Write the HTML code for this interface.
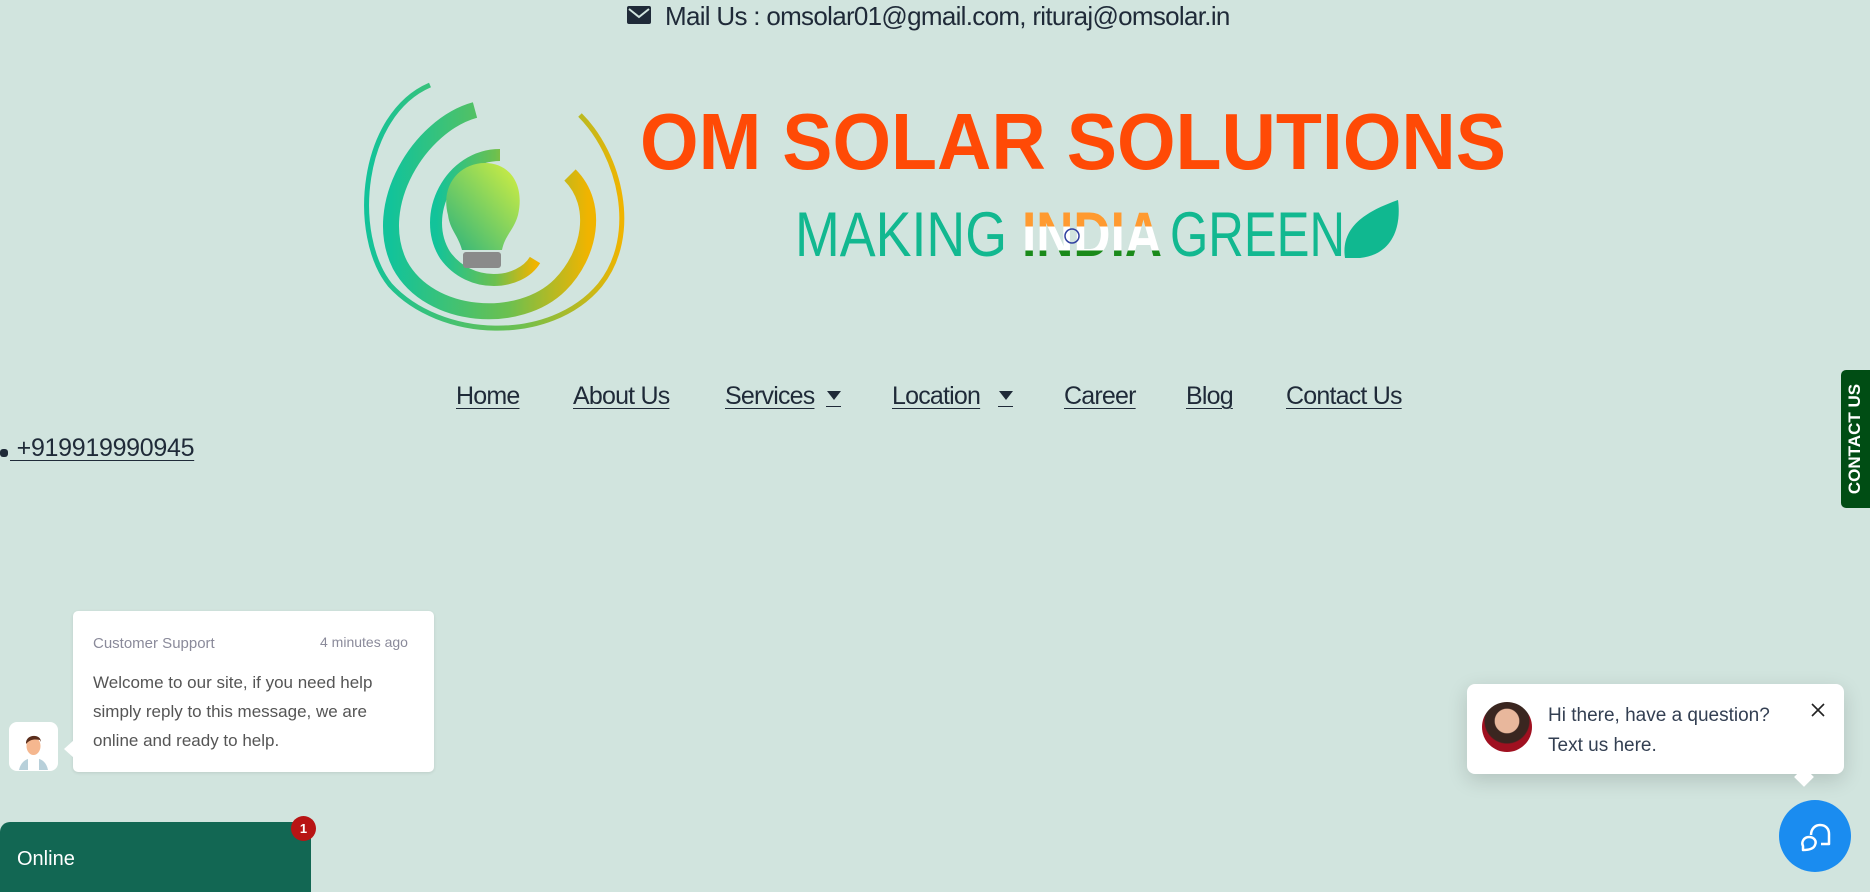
<!DOCTYPE html>
<html><head><meta charset="utf-8"><style>
*{margin:0;padding:0;box-sizing:border-box}
body{width:1870px;height:883px;overflow:hidden;background:#d1e4de;font-family:"Liberation Sans",sans-serif;position:relative;color:#1f2a38}
.abs{position:absolute}
.mail{top:1px;font-size:26px;letter-spacing:-0.7px;color:#1f2a38;white-space:nowrap}
.nav a{position:absolute;top:382px;font-size:25px;letter-spacing:-0.8px;color:#1f2a38;text-decoration:underline;text-underline-offset:4px;text-decoration-thickness:1px;white-space:nowrap}
.arr{position:absolute;top:391px;width:0;height:0;border-left:7px solid transparent;border-right:7px solid transparent;border-top:9px solid #1f2a38}
.arrl{position:absolute;top:406px;width:15px;height:1px;background:#1f2a38}
</style></head><body>
<div class="abs" style="left:627px;top:6px;width:24px;height:18px;background:#1f2a38;border-radius:2px"></div>
<svg class="abs" style="left:627px;top:6px" width="24" height="18"><path d="M2 3 L12 11 L22 3" stroke="#d1e4de" stroke-width="2" fill="none"/></svg>
<div class="abs mail" style="left:665px">Mail Us : omsolar01@gmail.com, rituraj@omsolar.in</div>

<svg class="abs" style="left:350px;top:75px" width="1200" height="265" viewBox="0 0 1200 265">
<defs><linearGradient id="g" x1="0" x2="1"><stop offset="0" stop-color="#12c39a"/><stop offset="0.6" stop-color="#6cc04f"/><stop offset="1" stop-color="#f0b400"/></linearGradient>
<linearGradient id="b" x1="0" y1="1" x2="1" y2="0"><stop offset="0" stop-color="#2bb37d"/><stop offset="1" stop-color="#d6f040"/></linearGradient>
<linearGradient id="t" x1="0" y1="0" x2="0" y2="1"><stop offset="0.38" stop-color="#ff9a30"/><stop offset="0.38" stop-color="#ffffff"/><stop offset="0.72" stop-color="#ffffff"/><stop offset="0.72" stop-color="#1a8a1a"/></linearGradient></defs>
<path d="M80 10 C10 40 0 160 40 210 C90 265 200 270 250 210 C290 160 270 80 230 40" stroke="url(#g)" stroke-width="5" fill="none"/>
<path d="M125 35 C70 50 20 130 50 190 C80 245 170 250 210 210 C240 180 250 130 220 100" stroke="url(#g)" stroke-width="16" fill="none"/>
<path d="M150 80 C100 80 70 140 95 180 C120 215 170 210 185 185" stroke="url(#g)" stroke-width="12" fill="none"/>
<path d="M98 140 C90 110 110 88 135 88 C160 88 175 110 168 140 C164 155 155 160 152 175 L112 175 C108 160 100 155 98 140Z" fill="url(#b)"/>
<rect x="113" y="177" width="38" height="16" rx="3" fill="#8a8a8a"/>
<text x="290" y="94" font-family="Liberation Sans" font-weight="bold" font-size="80" fill="#ff4a06" textLength="866" lengthAdjust="spacingAndGlyphs">OM SOLAR SOLUTIONS</text>
<text x="445" y="181" font-family="Liberation Sans" font-size="63" fill="#12b890" textLength="212" lengthAdjust="spacingAndGlyphs">MAKING</text>
<g transform="translate(672,135)"><text x="0" y="46" font-family="Liberation Sans" font-weight="bold" font-size="63" fill="url(#t)" textLength="140" lengthAdjust="spacingAndGlyphs">INDIA</text></g>
<circle cx="722" cy="161" r="7" fill="none" stroke="#3040a0" stroke-width="1.5"/>
<text x="820" y="181" font-family="Liberation Sans" font-size="63" fill="#12b890" textLength="175" lengthAdjust="spacingAndGlyphs">GREEN</text>
<path d="M995 183 C990 150 1020 135 1048 125 C1052 155 1040 180 1010 183 Z" fill="#10b890"/>
</svg>

<div class="nav">
<a style="left:456px">Home</a>
<a style="left:573px">About Us</a>
<a style="left:725px">Services</a><span class="arr" style="left:827px"></span><span class="arrl" style="left:826px"></span>
<a style="left:892px">Location</a><span class="arr" style="left:999px"></span><span class="arrl" style="left:998px"></span>
<a style="left:1064px">Career</a>
<a style="left:1186px">Blog</a>
<a style="left:1286px">Contact Us</a>
<a style="left:10px;top:434px;letter-spacing:-0.3px">&nbsp;+919919990945</a>
</div>
<div class="abs" style="left:0;top:449px;width:8px;height:8px;background:#1f2a38;border-radius:3px"></div>

<div class="abs" style="left:1841px;top:370px;width:29px;height:138px;background:#004d14;border-radius:5px 0 0 5px"></div>
<div class="abs" style="left:1841px;top:370px;width:29px;height:138px;display:flex;align-items:center;justify-content:center"><span style="transform:rotate(-90deg);color:#fff;font-weight:bold;font-size:17px;white-space:nowrap">CONTACT US</span></div>

<div class="abs" style="left:73px;top:611px;width:361px;height:161px;background:#fff;border-radius:5px;box-shadow:0 1px 3px rgba(0,0,0,.1)"></div>
<div class="abs" style="left:64px;top:740px;width:0;height:0;border-top:9px solid transparent;border-bottom:9px solid transparent;border-right:10px solid #fff"></div>
<div class="abs" style="left:93px;top:635px;font-size:15px;color:#8a8a9a">Customer Support</div>
<div class="abs" style="left:320px;top:634px;font-size:14px;color:#8a8a9a">4 minutes ago</div>
<div class="abs" style="left:93px;top:668px;font-size:17px;line-height:29px;color:#555">Welcome to our site, if you need help<br>simply reply to this message, we are<br>online and ready to help.</div>
<div class="abs" style="left:9px;top:722px;width:49px;height:49px;background:#fff;border-radius:8px"></div>
<svg class="abs" style="left:9px;top:722px" width="49" height="49"><path d="M10 48 C12 38 20 36 24 36 C30 36 37 38 39 48Z" fill="#b8d0da"/><rect x="19" y="32" width="11" height="16" fill="#fff"/><ellipse cx="24.5" cy="24" rx="7" ry="9" fill="#f5b78f"/><path d="M17 22 C16 12 32 11 32 20 L31 18 C26 17 21 17 17 22Z" fill="#5a2e1c"/></svg>

<div class="abs" style="left:0;top:822px;width:311px;height:70px;background:#126753;border-radius:10px 0 0 0"></div>
<div class="abs" style="left:17px;top:848px;color:#fff;font-size:20px">Online</div>
<div class="abs" style="left:291px;top:816px;width:25px;height:25px;border-radius:50%;background:#b81414;color:#fff;font-size:13px;font-weight:bold;text-align:center;line-height:25px">1</div>

<div class="abs" style="left:1467px;top:684px;width:377px;height:90px;background:#fff;border-radius:8px;box-shadow:0 6px 20px rgba(0,0,0,.15)"></div>
<div class="abs" style="left:1797px;top:770px;width:14px;height:14px;background:#fff;transform:rotate(45deg)"></div>
<div class="abs" style="left:1482px;top:702px;width:50px;height:50px;border-radius:50%;background:radial-gradient(circle at 50% 38%,#e8b79c 0 30%,#3a2620 32% 55%,#a01020 58%)"></div>
<div class="abs" style="left:1548px;top:701px;font-size:19px;line-height:30px;color:#333f52">Hi there, have a question?<br>Text us here.</div>
<svg class="abs" style="left:1811px;top:703px" width="14" height="14"><path d="M1 1L13 13M13 1L1 13" stroke="#222" stroke-width="1.6"/></svg>
<div class="abs" style="left:1779px;top:800px;width:72px;height:72px;border-radius:50%;background:#1a8cf0"></div>
<svg class="abs" style="left:1796px;top:818px" width="38" height="38" viewBox="0 0 38 38"><path d="M15 17 C15 11 19 7 24 7 C30 7 33 11 33 16 L33 26 L25 26 M7 32 L7 28 C5 24 8 19 13 19 C18 19 21 23 19 27 C18 30 14 32 7 32Z" stroke="#fff" stroke-width="2.5" fill="none" stroke-linejoin="round"/></svg>
</body></html>
